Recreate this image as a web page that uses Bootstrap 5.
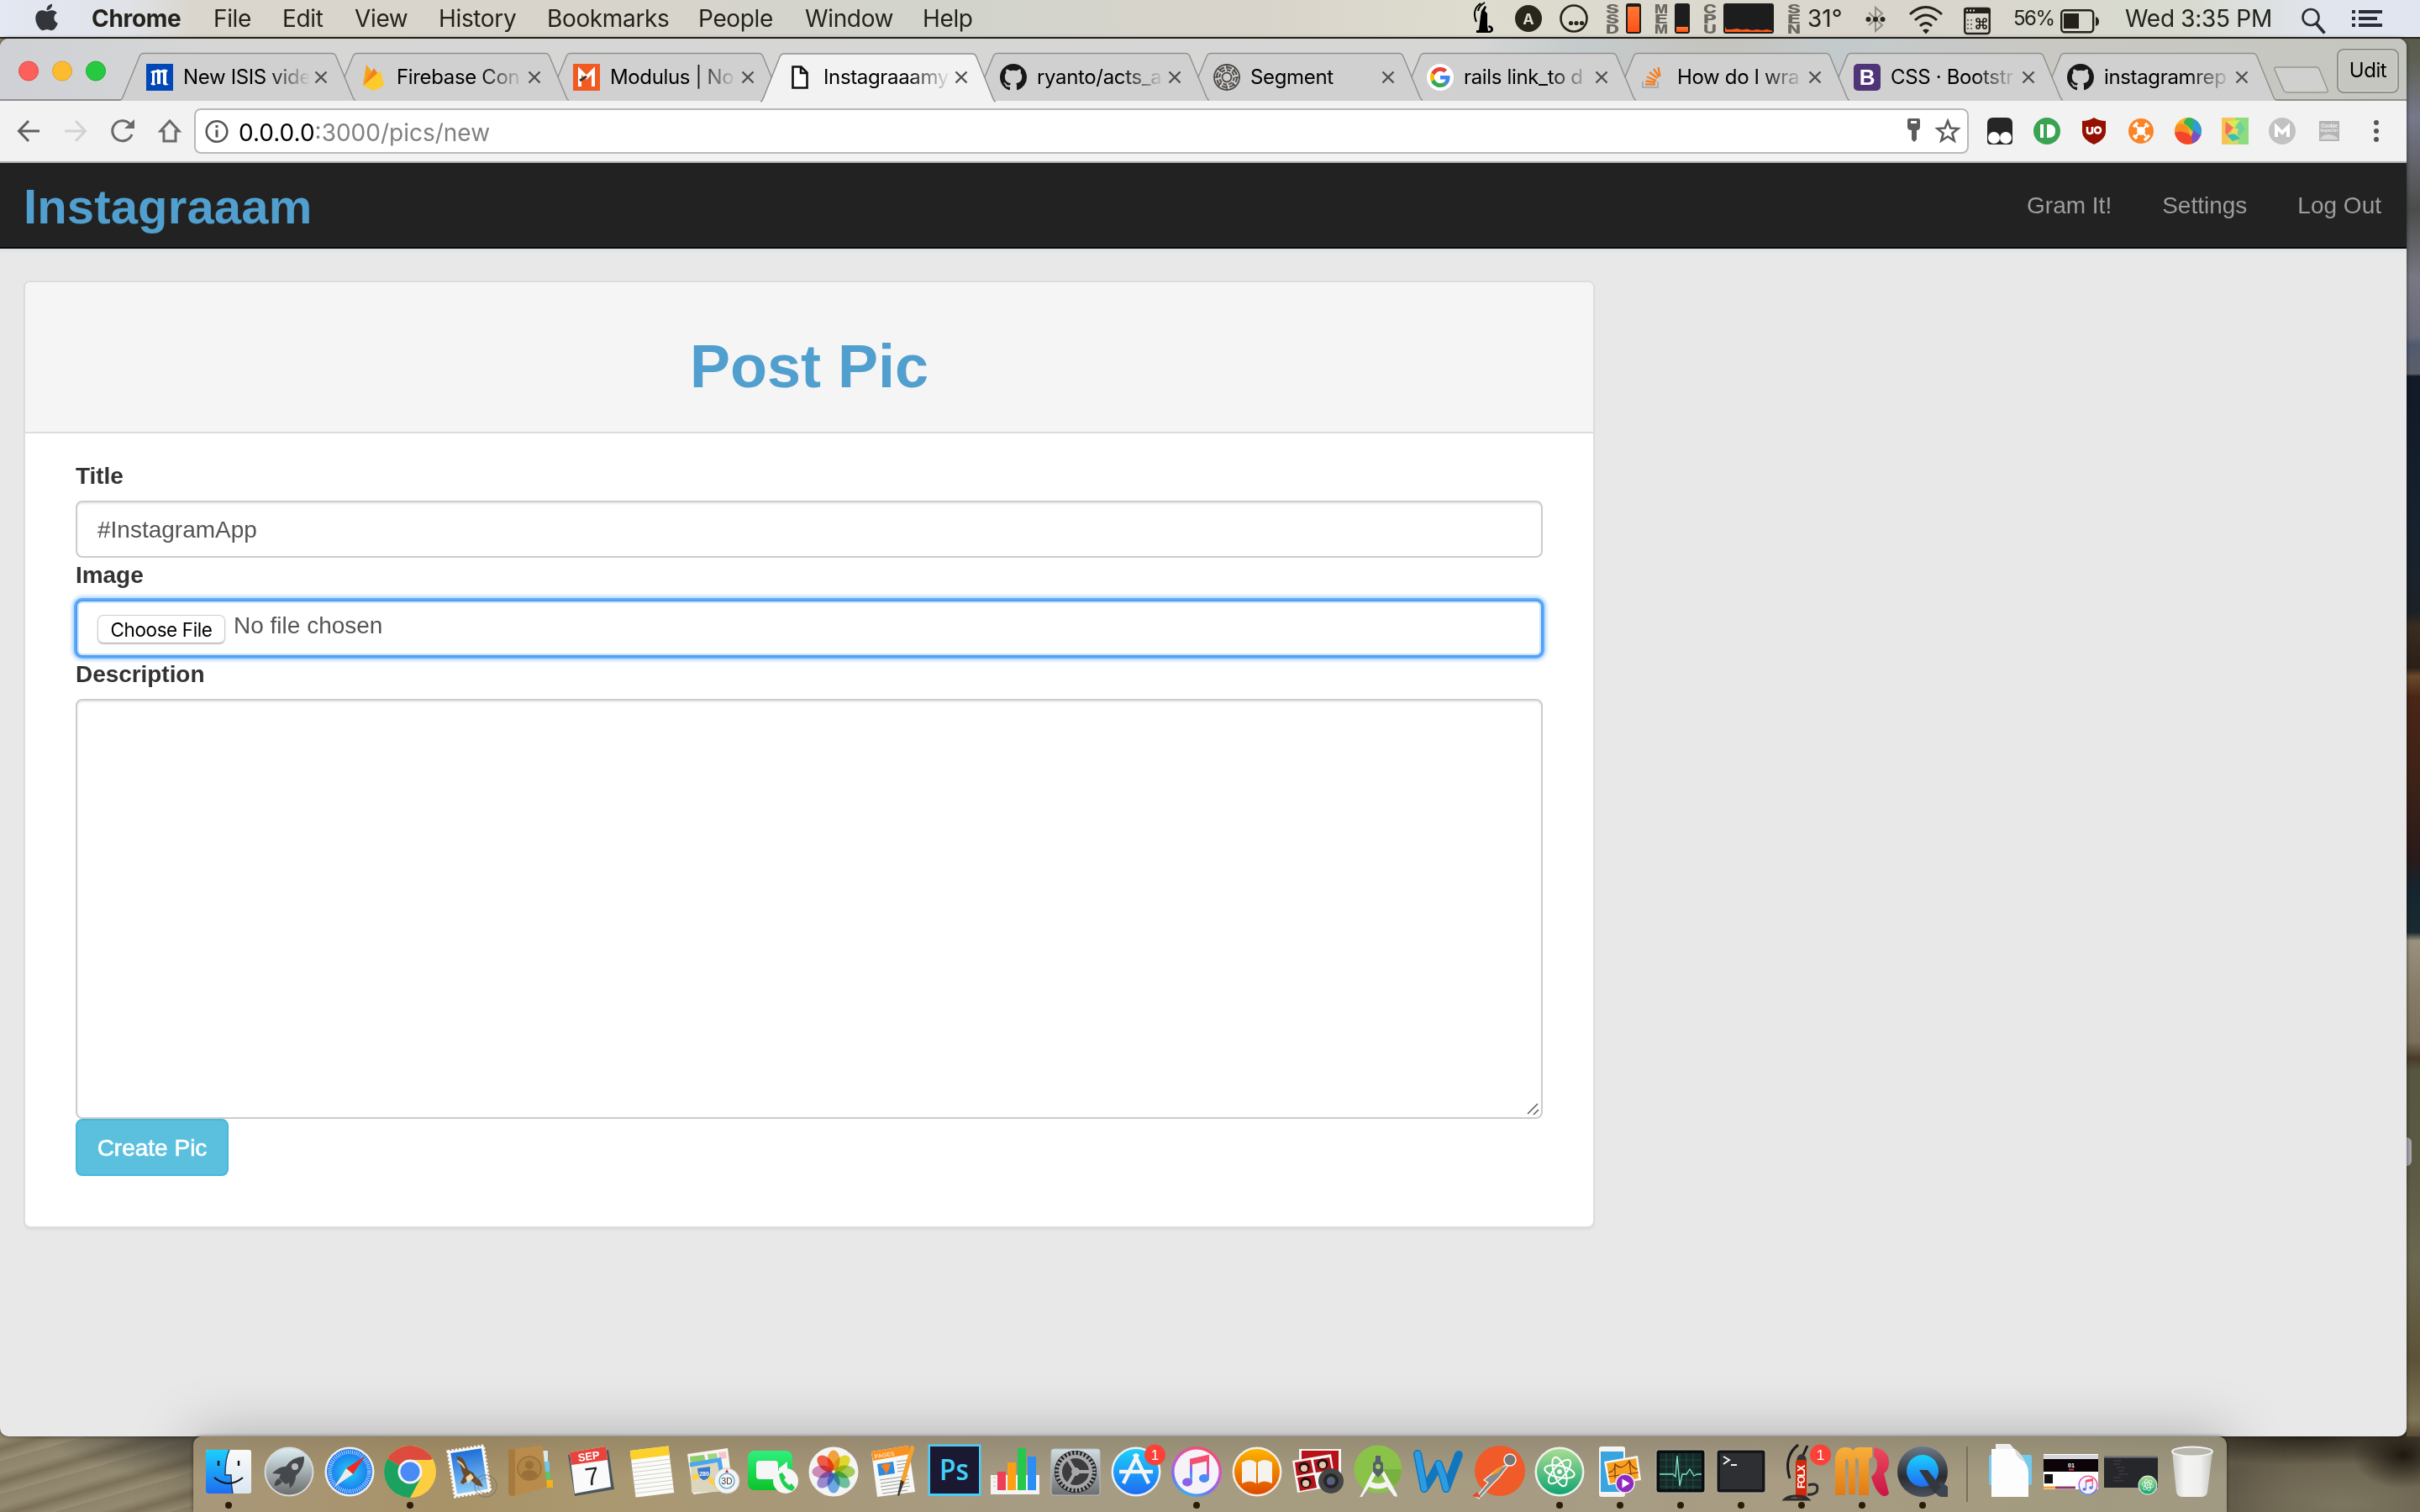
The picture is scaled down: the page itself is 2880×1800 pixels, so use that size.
<!DOCTYPE html>
<html lang="en">
<head>
<meta charset="utf-8">
<title>Instagraaam</title>
<link href="https://cdn.jsdelivr.net/npm/bootstrap@5.3.0/dist/css/bootstrap.min.css" rel="stylesheet">
<style>
body{width:2880px;height:1800px;overflow:hidden;font-family:"Liberation Sans",Arial,sans-serif;font-size:28px;line-height:40px;color:#333;
 background:
 linear-gradient(180deg,#4c5240 0,#5c6052 70px,#77788a 140px,#4b4d4a 250px,#787884 330px,#6a6b78 400px,#505a70 410px,#5c5f68 445px,#111a26 448px,#17222e 640px,#1d2126 730px,#3a2c20 745px,#2a2018 795px,#6b4a2c 805px,#4a2616 830px,#3b2218 940px,#2a1a1a 1020px,#14252e 1060px,#1b2a30 1110px,#99917e 1120px,#857c68 1180px,#7a705a 1240px,#4a3a28 1260px,#565641 1275px,#5c5a44 1400px,#6b6850 1500px,#5b5238 1620px,#80765a 1690px,#5a4c34 1710px) 2864px 0/16px 1710px no-repeat,
 radial-gradient(60px 40px at 2860px 1732px,#1e1810,transparent),
 radial-gradient(220px 34px at 2740px 1710px,#2a251b,transparent),
 radial-gradient(160px 60px at 2790px 1790px,#7d7660,transparent),
 linear-gradient(90deg,transparent 2600px,#675f4c 2660px),
 radial-gradient(180px 60px at 230px 1700px,#45423a,transparent),
 repeating-linear-gradient(164deg,#8d8369 0,#948a72 14px,#7c7158 24px,#9a9078 38px);}
.ui{font-family:Inter,Roboto,sans-serif}
svg{display:block;flex:none;overflow:visible}
.macbar{height:46px;padding-left:42px;border-bottom:2px solid #2a261e;color:#23221c;line-height:44px;
 background:linear-gradient(90deg,#e4e8f2 0,#e0e2e8 150px,#dad6cd 230px,#d9d4cb 620px,#d2d4cc 1150px,#d9d4cb 1500px,#dedccf 1750px,#d9d5cd 2250px,#d8dad0 2600px,#e1e5ed 2760px,#e0e5f0 2880px)}
.macbar span{display:block;white-space:nowrap;flex:none}
.m-apple{width:67px}.m-chrome{width:146px;font-weight:700;letter-spacing:-.3px}.m-file{width:82px}.m-edit{width:86px}.m-view{width:100px}.m-hist{width:129px}
.m-book{width:180px}.m-peop{width:127px}.m-wind{width:140px}.m-help{width:655px}
.m-temp{width:70px}.m-batt{width:56px;font-size:24px;letter-spacing:-1.5px}.m-clock{width:211px;letter-spacing:-.3px}
.macbar .m-menu{letter-spacing:-.35px;margin-left:-1px;padding-right:1px;box-sizing:content-box}
.win{width:2864px;height:1664px;border-radius:10px;background:#e8e8e8;overflow:hidden;box-shadow:0 0 5px rgba(0,0,0,.55)}
.tabstrip{height:74px;padding-left:20px;border-bottom:2px solid #8f8f8f;position:relative;
 background:linear-gradient(90deg,#cfd1d6 0,#d6d6d5 250px,#d6d6d5 1750px,#c4cbcc 1880px,#c6c4be 2050px,#c3cacc 2180px,#c9c8c3 2420px,#c6c6c0 2864px)}
.lights{width:123px;padding-top:26px}
.btab{width:280px;height:74px;margin-right:-26px;position:relative;flex:none;padding:17px 0 0 31px;font-size:24px;letter-spacing:-.35px;line-height:58px;color:#000}
.btab>.tabshape{position:absolute;left:0;top:0}
.btab>.fav{position:relative;margin-right:12px}
.btab>.ttl{position:relative;width:150px;white-space:nowrap;-webkit-mask-image:linear-gradient(90deg,#000 100px,transparent 152px);mask-image:linear-gradient(90deg,#000 100px,transparent 152px)}
.btab>.cls{position:relative;margin-left:6px}
.t1{z-index:9}.t2{z-index:8}.t3{z-index:7}.t4{z-index:20}.t5{z-index:6}.t6{z-index:5}.t7{z-index:4}.t8{z-index:3}.t9{z-index:2}.t10{z-index:1}
.newtab{margin:33px 0 0 23px}
.userbtn{width:74px;height:53px;margin:12px 0 0 9px;border:2px solid #92928e;border-radius:8px;font-size:24px;line-height:48px;color:#000;text-align:center;letter-spacing:-.4px;box-shadow:inset 0 0 0 1px #d8d8d4}
.toolbar{height:74px;background:#f2f2f2;border-bottom:2px solid #b0b0b0;padding-left:20px}
.omni{width:2112px;height:54px;margin-left:-2px;border:2px solid #b9b9b9;border-radius:8px;background:#fff;padding-left:11px;color:#808080;letter-spacing:0}
.omni b{font-weight:400;color:#000}
.appbar{height:102px;padding:0 30px 0 28px;background:#222;border-bottom:2px solid #080808;box-shadow:0 2px 4px #d4e0e6}
.appbar .navbar-brand{font-size:58px;font-weight:700;color:#519fce;line-height:60px;margin:0;padding:3px 0 0;letter-spacing:.15px}
.appbar .nav-link{color:#9d9d9d;padding:1px 0 0;letter-spacing:0}
.appbar .navgap{margin-left:60px}
.panel-card{width:1870px;margin:38px 0 0 28px;border:2px solid #ddd;border-radius:8px;box-shadow:0 2px 2px rgba(0,0,0,.05)}
.panel-card>.card-header{height:180px;background:#f5f5f5;border-bottom:2px solid #ddd;border-radius:6px 6px 0 0;padding:0}
.panel-card h1{font-size:72px;font-weight:700;color:#519fce;line-height:80px;margin:22px 0 0}
.panel-card>.card-body{padding:30px 60px 60px}
.panel-card label{display:block;font-weight:700;height:40px;line-height:42px;margin-bottom:10px;letter-spacing:-.05px}
.panel-card .form-control{height:68px;padding:12px 24px;border:2px solid #ccc;border-radius:8px;font-size:28px;line-height:42px;color:#555;box-shadow:inset 0 2px 2px rgba(0,0,0,.075)}
.panel-card .filebox{border-color:#4a9ff5;box-shadow:0 0 0 2px #63adf8,0 0 4px 4px #a9d2fb,inset 0 0 0 2px #cfe4fd;line-height:34px}
.filebtn{width:152px;height:34px;margin-top:4px;font-size:22.500px;line-height:34px;color:#000;background:#fff;border:1px solid #cfcfcf;border-bottom-color:#b0b0b0;border-radius:7px;text-align:center;box-shadow:0 1px 2px rgba(0,0,0,.2);letter-spacing:-.4px}
.filename{padding-left:10px}
.panel-card .descbox{height:500px;resize:none}
.grip{position:absolute;right:3px;bottom:3px}
.btn-create{height:68px;width:182px;padding:0;font-size:28px;line-height:66px;color:#fff;background:#5bc0de;border:2px solid #46b8da;border-radius:8px;-webkit-text-stroke:.6px #fff;letter-spacing:0}
.dock{width:2420px;height:90px;margin-left:230px;padding-left:6px;border-radius:10px 10px 0 0;position:relative;box-shadow:0 0 70px rgba(0,0,0,.28),0 0 4px rgba(0,0,0,.5);
 background:linear-gradient(180deg,rgba(70,65,55,.18),transparent 50px),linear-gradient(90deg,#a8987a 0,#a89268 300px,#aa9870 480px,#a89878 700px,#a69c84 1000px,#a69c80 1300px,#a79c84 1700px,#a89c82 1880px,#a39b80 2200px,#a19a82 2420px)}
.petals ellipse{mix-blend-mode:multiply}
.knob{position:absolute;left:2864px;top:1354px;width:6px;height:34px;border-radius:0 6px 6px 0;background:#a6a6ac}
</style>
<script src="https://cdn.jsdelivr.net/npm/bootstrap@5.3.0/dist/js/bootstrap.bundle.min.js"></script>
</head>
<body class="m-0">
<svg width="0" height="0" class="position-absolute">
 <defs>
  <symbol id="tb" viewBox="0 0 280 74"><path d="M0 73.500Q3 73 4 70L24 20Q25.500 18 28 18H252Q254.500 18 256 20L276 70Q277 73 280 73.500V74H0z" fill="#d0d0d0"/><path d="M0 73Q2 72.500 3 70L23.500 20Q25 17.500 28 17.500H252Q255 17.500 256.500 20L277 70Q278 72.500 280 73" fill="none" stroke="#8f8f8f" stroke-width="1.400"/></symbol>
  <symbol id="tba" viewBox="0 0 280 74"><path d="M0 74Q2 73 3 70L23.500 20Q25 17.500 28 17.500H252Q255 17.500 256.500 20L277 70Q278 73 280 74z" fill="#f2f2f2"/><path d="M0 73Q2 72.500 3 70L23.500 20Q25 17.500 28 17.500H252Q255 17.500 256.500 20L277 70Q278 72.500 280 73" fill="none" stroke="#8f8f8f" stroke-width="1.400"/></symbol>
  <symbol id="cl" viewBox="0 0 16 16"><path d="M1.500 1.500l13 13M14.500 1.500l-13 13" stroke="#505050" stroke-width="2.400"/></symbol>
  <symbol id="gh" viewBox="0 0 16 16"><path fill="#191717" d="M8 0C3.580 0 0 3.580 0 8c0 3.540 2.290 6.530 5.470 7.590.4.070.55-.17.55-.38 0-.19-.01-.82-.01-1.490-2.010.37-2.530-.49-2.690-.94-.09-.23-.48-.94-.82-1.130-.28-.15-.68-.52-.01-.53.63-.01 1.080.58 1.230.82.72 1.210 1.870.87 2.330.66.070-.52.28-.87.51-1.070-1.780-.2-3.640-.89-3.640-3.950 0-.87.31-1.590.82-2.150-.08-.2-.36-1.020.080-2.120 0 0 .67-.21 2.200.82.64-.18 1.320-.27 2-.27.68 0 1.360.09 2 .27 1.530-1.040 2.200-.82 2.200-.82.44 1.100.16 1.920.080 2.120.51.56.82 1.270.82 2.150 0 3.070-1.870 3.750-3.650 3.950.29.25.54.73.54 1.480 0 1.070-.01 1.930-.01 2.200 0 .21.15.46.55.38A8.013 8.013 0 0016 8c0-4.420-3.580-8-8-8z"/></symbol>
  <symbol id="dot" viewBox="0 0 10 10"><circle cx="5" cy="5" r="4" fill="#2a1c08"/></symbol>
  <linearGradient id="gBlue" x2="0" y2="1"><stop stop-color="#1bd0fb"/><stop offset="1" stop-color="#1f6cf2"/></linearGradient>
  <linearGradient id="gWhite" x2="0" y2="1"><stop stop-color="#fafafa"/><stop offset="1" stop-color="#dbe6f3"/></linearGradient>
  <linearGradient id="gRocket" x2="0" y2="1"><stop stop-color="#dceef3"/><stop offset="1" stop-color="#6d6d6d"/></linearGradient>
  <radialGradient id="gSaf"><stop stop-color="#22d0f2"/><stop offset="1" stop-color="#1a6df0"/></radialGradient>
  <linearGradient id="gSky" x2="0" y2="1"><stop stop-color="#1f6fd8"/><stop offset="1" stop-color="#8ccaf6"/></linearGradient>
  <linearGradient id="gGreen" x2="0" y2="1"><stop stop-color="#2ff07c"/><stop offset="1" stop-color="#0bc32a"/></linearGradient>
  <linearGradient id="gOr" x2="0" y2="1"><stop stop-color="#fdb500"/><stop offset="1" stop-color="#dd4a00"/></linearGradient>
  <linearGradient id="gAtom" x2="0" y2="1"><stop stop-color="#a8dc92"/><stop offset="1" stop-color="#12a470"/></linearGradient>
  <linearGradient id="gTun" x1="0.700" x2="0.300" y2="1"><stop stop-color="#fb4a62"/><stop offset=".45" stop-color="#c858d8"/><stop offset=".75" stop-color="#7a6cf0"/><stop offset="1" stop-color="#2fb6f6"/></linearGradient>
  <linearGradient id="gGray" x2="0" y2="1"><stop stop-color="#d2dee3"/><stop offset="1" stop-color="#6c6e71"/></linearGradient>
  <linearGradient id="gMa" x2="0" y2="1"><stop stop-color="#f7b03c"/><stop offset="1" stop-color="#e27a12"/></linearGradient>
  <linearGradient id="gMb" x2="0" y2="1"><stop stop-color="#ee4a5e"/><stop offset="1" stop-color="#c81446"/></linearGradient>
  <linearGradient id="gQ" x2="0" y2="1"><stop stop-color="#6c7a8a"/><stop offset=".6" stop-color="#2a2c32"/><stop offset="1" stop-color="#4a5260"/></linearGradient>
  <linearGradient id="gSsd" x2="0" y2="1"><stop stop-color="#ff7a35"/><stop offset="1" stop-color="#ff4f14"/></linearGradient>
  <linearGradient id="gTrash"><stop stop-color="#c8c8c4"/><stop offset=".3" stop-color="#f4f4f2"/><stop offset=".7" stop-color="#efefed"/><stop offset="1" stop-color="#c6c6c0"/></linearGradient>
  <symbol id="tunes" viewBox="0 0 62 62"><circle cx="31" cy="31" r="30" fill="url(#gTun)"/><circle cx="31" cy="31" r="26.500" fill="#f6f3f8"/><path d="M24.500 43V17l20-4.500V38" fill="none" stroke="url(#gTun)" stroke-width="3"/><path d="M23 16l23-5v7l-23 5z" fill="#f2506e"/><ellipse cx="20" cy="43.500" rx="6" ry="5" fill="#8a62ea"/><ellipse cx="40" cy="39" rx="6" ry="5" fill="#4a8cf2"/></symbol>
  <symbol id="atom" viewBox="0 0 62 62"><circle cx="31" cy="31" r="29.500" fill="#eef2ee"/><circle cx="31" cy="31" r="27" fill="url(#gAtom)"/><g fill="none" stroke="#fff" stroke-width="2"><ellipse cx="31" cy="31" rx="18" ry="7" transform="rotate(12 31 31)"/><ellipse cx="31" cy="31" rx="18" ry="7" transform="rotate(72 31 31)"/><ellipse cx="31" cy="31" rx="18" ry="7" transform="rotate(132 31 31)"/></g><circle cx="31" cy="31" r="2.800" fill="#fff"/></symbol>
 </defs>
</svg>
<div class="knob"></div>

<header class="macbar ui d-flex">
 <span class="m-apple"><svg width="27" height="38" viewBox="0 0 384 512"><path transform="translate(0 20)" fill="#33353a" d="M318.700 268.700c-.2-36.700 16.400-64.400 50-84.800-18.800-26.900-47.200-41.700-84.700-44.600-35.500-2.800-74.300 20.700-88.500 20.700-15 0-49.400-19.700-76.400-19.700C63.300 141.200 4 184.800 4 273.500q0 39.300 14.400 81.200c12.800 36.700 59 126.700 107.200 125.200 25.200-.6 43-17.900 75.800-17.900 31.800 0 48.300 17.900 76.400 17.900 48.600-.7 90.400-82.500 102.600-119.300-65.200-30.700-61.700-90-61.700-91.900zm-56.600-164.200c27.300-32.400 24.800-61.900 24-72.500-24.100 1.400-52 16.400-67.900 34.900-17.500 19.800-27.800 44.300-25.600 71.900 26.100 2 49.900-11.400 69.500-34.300z"/></svg></span>
 <span class="m-chrome">Chrome</span><span class="m-menu m-file">File</span><span class="m-menu m-edit">Edit</span><span class="m-menu m-view">View</span><span class="m-menu m-hist">History</span><span class="m-menu m-book">Bookmarks</span><span class="m-menu m-peop">People</span><span class="m-menu m-wind">Window</span><span class="m-menu m-help">Help</span>
 <svg width="49" height="44" viewBox="0 0 49 44"><path d="M3 39v-3h3l2-17 1-6 4-6 2 1-2 5 3 3v14l1 7 3-1v-2l-3-2 1-2q5 1 5 5 0 3-4 4z" fill="#000"/><path d="M8 4Q-3 12 3 26M13 3Q6 7 5 13" fill="none" stroke="#000" stroke-width="2"/></svg>
 <svg width="53" height="44" viewBox="0 0 53 44"><circle cx="16" cy="22" r="16" fill="#29261b"/><text x="16" y="28.500" font-size="18" font-weight="700" fill="#dedbd0" text-anchor="middle">A</text></svg>
 <svg width="54" height="44" viewBox="0 0 54 44"><circle cx="17" cy="22" r="15.500" fill="none" stroke="#26231b" stroke-width="2.600"/><g fill="#26231b"><circle cx="13.500" cy="27.500" r="2.600"/><circle cx="20" cy="27.500" r="2.600"/><circle cx="26.500" cy="27.500" r="2.600"/></g></svg>
 <svg width="58" height="44" viewBox="0 0 58 44"><g fill="#6b6962" font-size="14.500" font-weight="800"><text x="1" y="15.500" textLength="16" lengthAdjust="spacingAndGlyphs">S</text><text x="1" y="27.500" textLength="16" lengthAdjust="spacingAndGlyphs">S</text><text x="1" y="39.500" textLength="16" lengthAdjust="spacingAndGlyphs">D</text></g><rect x="25" y="4" width="18" height="36" rx="3" fill="#1d1d1d"/><rect x="27" y="8" width="14" height="30" fill="url(#gSsd)"/></svg>
 <svg width="58" height="44" viewBox="0 0 58 44"><g fill="#6b6962" font-size="14.500" font-weight="800"><text x="1" y="15.500" textLength="16" lengthAdjust="spacingAndGlyphs">M</text><text x="1" y="27.500" textLength="16" lengthAdjust="spacingAndGlyphs">E</text><text x="1" y="39.500" textLength="16" lengthAdjust="spacingAndGlyphs">M</text></g><rect x="25" y="4" width="18" height="36" rx="3" fill="#1d1d1d"/><rect x="27" y="32" width="14" height="6" fill="url(#gSsd)"/></svg>
 <svg width="100" height="44" viewBox="0 0 100 44"><g fill="#6b6962" font-size="14.500" font-weight="800"><text x="1" y="15.500" textLength="16" lengthAdjust="spacingAndGlyphs">C</text><text x="1" y="27.500" textLength="16" lengthAdjust="spacingAndGlyphs">P</text><text x="1" y="39.500" textLength="16" lengthAdjust="spacingAndGlyphs">U</text></g><rect x="25" y="4" width="60" height="36" rx="3" fill="#1d1d1d"/><path d="M27 38v-6l2 3 6 0 6-1 6 1.500 6-1 6 1.500 6-1 6 1 6-1 6 1.500V38z" fill="#ff5a1c"/></svg>
 <svg width="25" height="44" viewBox="0 0 25 44"><g fill="#6b6962" font-size="14.500" font-weight="800"><text x="1" y="15.500" textLength="16" lengthAdjust="spacingAndGlyphs">S</text><text x="1" y="27.500" textLength="16" lengthAdjust="spacingAndGlyphs">E</text><text x="1" y="39.500" textLength="16" lengthAdjust="spacingAndGlyphs">N</text></g></svg>
 <span class="m-temp">31°</span>
 <svg width="51" height="44" viewBox="0 0 51 44"><path d="M3 15l16 15-8 7V9l8 7L3 30" fill="none" stroke="#8f8d86" stroke-width="2"/><g fill="#29261b"><circle cx="2.500" cy="23" r="3"/><circle cx="11" cy="23" r="3"/><circle cx="19.500" cy="23" r="3"/></g></svg>
 <svg width="65" height="44" viewBox="0 0 65 44"><g fill="none" stroke="#23211a" stroke-width="3"><path d="M1 17Q20 0 39 17M7 24Q20 12 33 24M13 31Q20 24 27 31"/></g><path d="M16 36q4-3 8 0l-4 4.500z" fill="#23211a"/></svg>
 <svg width="59" height="44" viewBox="0 0 59 44"><rect x="1.200" y="10" width="29.500" height="30" rx="3" fill="none" stroke="#23211a" stroke-width="2.400"/><path d="M0 16v-4q0-3 3-3h26q3 0 3 3v4z" fill="#23211a"/><path d="M3 12.500h2m2 0h2m2 0h2" stroke="#ddd" stroke-width="2"/><path d="M4 24h2m2 0h2M4 29h2m2 0h2M4 34h2m2 0h2" stroke="#55524a" stroke-width="1.500"/><path d="M19 26h4v4h-4zM19 26h-2a2 2 0 112-2zM23 26v-2a2 2 0 112 2zM23 30h2a2 2 0 11-2 2zM19 30v2a2 2 0 11-2-2z" fill="none" stroke="#23211a" stroke-width="1.700"/></svg>
 <span class="m-batt">56%</span>
 <svg width="77" height="44" viewBox="0 0 77 44"><rect x="1.200" y="12.200" width="38" height="26" rx="4" fill="none" stroke="#23211a" stroke-width="2.400"/><rect x="4" y="16" width="18" height="18" fill="#23211a"/><path d="M42 20q4 1 4 5.500t-4 5.500z" fill="#23211a"/></svg>
 <span class="m-clock">Wed 3:35 PM</span>
 <svg width="59" height="44" viewBox="0 0 59 44"><circle cx="10" cy="20.500" r="9.500" fill="none" stroke="#2b2d33" stroke-width="2.600"/><path d="M16.500 28l10 11.500" stroke="#2b2d33" stroke-width="3.600"/></svg>
 <svg width="36" height="44" viewBox="0 0 36 44"><path d="M0 14h4M8 14h28M0 22h4M8 22h22M0 30h4M8 30h28" stroke="#2b2d38" stroke-width="4"/></svg>
</header>

<main class="win position-relative">
 <div class="tabstrip ui d-flex align-items-start">
  <div class="lights"><svg width="110" height="26" viewBox="0 0 110 26"><g transform="translate(2 0)"><circle cx="12" cy="12.500" r="11.500" fill="#fc605b" stroke="#e04a44"/><circle cx="52" cy="12.500" r="11.500" fill="#fdbc2f" stroke="#e0a12a"/><circle cx="92" cy="12.500" r="11.500" fill="#27c941" stroke="#1aad2c"/></g></svg></div>
  <div class="btab t1 d-flex align-items-center"><svg class="tabshape" width="280" height="74"><use href="#tb"/></svg><svg class="fav" width="32" height="32" viewBox="0 0 32 32"><rect width="32" height="32" fill="#0048b8"/><path d="M5 10q3-3 6-2 3-3 6 0 5-3 9 0-2 1-2 3v11q0 2 3 2-4 3-7 0V11q-2-2-3 0v13h-4V11q-1-2-3 0v11q0 3 2 2-3 3-7 0 2-1 2-3V11z" fill="#fff"/></svg><div class="ttl">New ISIS vide</div><svg class="cls" width="16" height="16"><use href="#cl"/></svg></div>
  <div class="btab t2 d-flex align-items-center"><svg class="tabshape" width="280" height="74"><use href="#tb"/></svg><svg class="fav" width="32" height="32" viewBox="0 0 32 32"><path d="M4 26L8 1l7 9z" fill="#f9a11b"/><path d="M4 26L17 5l5 7z" fill="#f58220"/><path d="M4 26L25 8l4 18-12 6z" fill="#fcca2b"/></svg><div class="ttl">Firebase Con</div><svg class="cls" width="16" height="16"><use href="#cl"/></svg></div>
  <div class="btab t3 d-flex align-items-center"><svg class="tabshape" width="280" height="74"><use href="#tb"/></svg><svg class="fav" width="32" height="32" viewBox="0 0 32 32"><rect width="32" height="32" fill="#f15a22"/><path d="M8 27V8l8 8 8-8v19" fill="none" stroke="#fff" stroke-width="4"/><path d="M8 20l8-5" stroke="#333" stroke-width="3"/></svg><div class="ttl">Modulus | No</div><svg class="cls" width="16" height="16"><use href="#cl"/></svg></div>
  <div class="btab t4 d-flex align-items-center"><svg class="tabshape" width="280" height="76" viewBox="0 0 280 74" preserveAspectRatio="none"><use href="#tba"/></svg><svg class="fav" width="32" height="32" viewBox="0 0 32 32"><path d="M7.500 3.500h10l7 7v18h-17zM17 3v8h8" fill="#fff" stroke="#111" stroke-width="2.600"/></svg><div class="ttl">Instagraaamy</div><svg class="cls" width="16" height="16"><use href="#cl"/></svg></div>
  <div class="btab t5 d-flex align-items-center"><svg class="tabshape" width="280" height="74"><use href="#tb"/></svg><svg class="fav" width="32" height="32" viewBox="0 0 32 32"><use href="#gh" width="32" height="32"/></svg><div class="ttl">ryanto/acts_a</div><svg class="cls" width="16" height="16"><use href="#cl"/></svg></div>
  <div class="btab t6 d-flex align-items-center"><svg class="tabshape" width="280" height="74"><use href="#tb"/></svg><svg class="fav" width="32" height="32" viewBox="0 0 32 32"><g fill="none" stroke="#4c4844"><circle cx="16" cy="16" r="15" stroke-width="1.800"/><circle cx="16" cy="16" r="5.500" stroke-width="1.800"/><circle cx="16" cy="16" r="12" stroke-width="2" stroke-dasharray="6 3.400"/><circle cx="16" cy="16" r="8.700" stroke-width="2" stroke-dasharray="4.500 2.300"/><path d="M16 1v5M16 26v5M1 16h5M26 16h5M5.400 5.400l4 4M22.600 22.600l4 4M5.400 26.600l4-4M22.600 9.400l4-4" stroke-width="1.500"/></g></svg><div class="ttl">Segment</div><svg class="cls" width="16" height="16"><use href="#cl"/></svg></div>
  <div class="btab t7 d-flex align-items-center"><svg class="tabshape" width="280" height="74"><use href="#tb"/></svg><svg class="fav" width="32" height="32" viewBox="0 0 32 32"><circle cx="16" cy="16" r="16" fill="#fff"/><g transform="translate(4 4) scale(.5)"><path fill="#EA4335" d="M24 9.500c3.540 0 6.710 1.220 9.210 3.600l6.850-6.850C35.900 2.380 30.470 0 24 0 14.620 0 6.510 5.380 2.560 13.220l7.980 6.190C12.430 13.720 17.740 9.500 24 9.500z"/><path fill="#4285F4" d="M46.980 24.550c0-1.570-.15-3.090-.38-4.550H24v9.020h12.940c-.58 2.960-2.260 5.480-4.780 7.180l7.730 6c4.510-4.180 7.090-10.360 7.090-17.650z"/><path fill="#FBBC05" d="M10.530 28.590c-.48-1.450-.76-2.990-.76-4.590s.27-3.140.76-4.590l-7.980-6.190C.92 16.460 0 20.120 0 24c0 3.880.92 7.540 2.560 10.780l7.970-6.190z"/><path fill="#34A853" d="M24 48c6.480 0 11.930-2.130 15.890-5.810l-7.730-6c-2.150 1.450-4.920 2.300-8.160 2.300-6.260 0-11.570-4.220-13.470-9.910l-7.980 6.190C6.510 42.620 14.620 48 24 48z"/></g></svg><div class="ttl">rails link_to d</div><svg class="cls" width="16" height="16"><use href="#cl"/></svg></div>
  <div class="btab t8 d-flex align-items-center"><svg class="tabshape" width="280" height="74"><use href="#tb"/></svg><svg class="fav" width="32" height="32" viewBox="0 0 32 32"><path d="M3 21v7h18v-7" fill="none" stroke="#a6adb4" stroke-width="2"/><path d="M6 24.500h12M6.500 20.500l11.500 1.500M8 15.500l11 4.500M11 10l9.500 7M16 6l6.500 9.500M21.500 4l2 11" stroke="#f48024" stroke-width="2.400"/></svg><div class="ttl">How do I wra</div><svg class="cls" width="16" height="16"><use href="#cl"/></svg></div>
  <div class="btab t9 d-flex align-items-center"><svg class="tabshape" width="280" height="74"><use href="#tb"/></svg><svg class="fav" width="32" height="32" viewBox="0 0 32 32"><rect width="32" height="32" rx="5" fill="#4f3578"/><text x="16" y="25" font-family="Liberation Sans" font-size="26" font-weight="700" fill="#fff" text-anchor="middle">B</text></svg><div class="ttl">CSS · Bootstr</div><svg class="cls" width="16" height="16"><use href="#cl"/></svg></div>
  <div class="btab t10 d-flex align-items-center"><svg class="tabshape" width="280" height="74"><use href="#tb"/></svg><svg class="fav" width="32" height="32" viewBox="0 0 32 32"><use href="#gh" width="32" height="32"/></svg><div class="ttl">instagramrep</div><svg class="cls" width="16" height="16"><use href="#cl"/></svg></div>
  <svg class="newtab" width="66" height="32" viewBox="0 0 66 32"><path d="M3 1H50Q53 1 54 3L64 28Q65 31 62 31H16Q13 31 12 29L1 4Q0 1 3 1z" fill="#d0d0ce" stroke="#979793" stroke-width="1.500"/></svg>
  <div class="userbtn">Udit</div>
 </div>
 <div class="toolbar ui d-flex align-items-center">
  <svg width="56" height="32" viewBox="0 0 56 32"><path d="M27 16H3M14 4L2.500 16 14 28" fill="none" stroke="#5f5f5f" stroke-width="3"/></svg>
  <svg width="56" height="32" viewBox="0 0 56 32"><path d="M1 16h24M14 4l11.500 12L14 28" fill="none" stroke="#d2d2d2" stroke-width="3"/></svg>
  <svg width="56" height="32" viewBox="0 0 56 32"><path d="M25 20A12 12 0 1 1 22.500 7.500" fill="none" stroke="#6a6a6a" stroke-width="3"/><path d="M28 2v11H16z" fill="#6a6a6a"/></svg>
  <svg width="45" height="32" viewBox="0 0 45 32"><path d="M14 4L3 16h4v12h14V16h4z" fill="none" stroke="#6a6a6a" stroke-width="3"/></svg>
  <div class="omni d-flex align-items-center"><svg width="40" height="32" viewBox="0 0 40 32"><circle cx="14" cy="16.500" r="12.300" fill="none" stroke="#555" stroke-width="2.600"/><path d="M14 9v3M14 14.500v9" stroke="#555" stroke-width="3"/></svg><div class="flex-grow-1 pt-1"><b>0.0.0.0</b>:3000/pics/new</div>
   <svg width="34" height="32" viewBox="0 0 34 32"><path d="M1 3q0-2 2-2h11q2 0 2 2v8q0 4-4 4v11l-3 3-3-3V15q-5 0-5-4zM5 4v3h7V4z" fill="#5c5c5c" fill-rule="evenodd"/></svg>
   <svg width="38" height="32" viewBox="0 0 38 32"><path d="M15 4l3.300 8.500 9 .5-7 5.700 2.400 8.800L15 22.500l-7.700 5L9.700 18.700l-7-5.700 9-.5z" fill="none" stroke="#5c5c5c" stroke-width="2.600"/></svg></div>
  <svg width="516" height="34" viewBox="1 0 516 34">
   <g transform="translate(23 1)"><path d="M0 7q0-7 7-7h16q7 0 7 7v21q0 4-4 4H4q-4 0-4-4z" fill="#262626"/><circle cx="8" cy="24" r="7" fill="#fff"/><circle cx="22" cy="24" r="7" fill="#fff"/></g>
   <g transform="translate(78 1)"><circle cx="16" cy="16" r="16" fill="#3aa352"/><path d="M16 8h2q8 0 8 8t-8 8h-2zM8 8h4v16H8z" fill="#fff"/></g>
   <g transform="translate(136 1)"><path d="M14 0q6 4 14 4v13q0 9-14 15Q0 26 0 17V4q8 0 14-4z" fill="#951001"/><path d="M6 11v5q0 3 3 3t3-3v-5M12 11v8" stroke="#fff" stroke-width="2.600" fill="none"/><circle cx="18.500" cy="15" r="3.500" stroke="#fff" stroke-width="2.600" fill="none"/></g>
   <g transform="translate(191 1)"><circle cx="15" cy="16" r="15" fill="#fb8526"/><circle cx="15" cy="16" r="5" fill="#fff"/><path d="M9 10l12 12M21 10L9 22" stroke="#fff" stroke-width="2.400"/><path d="M6 11l5-5M19 27l6-6M20 7l4 4M6 21l4 4" stroke="#fff" stroke-width="3.400" fill="none"/></g>
   <g transform="translate(246 1)"><circle cx="16" cy="16" r="16" fill="#f6b32b"/><path d="M16 0a16 16 0 0116 16q-6 6-12-1t-9-8q0-5 5-7z" fill="#2fb457"/><path d="M22 2a16 16 0 019 20q-7 1-9-8 0-7 0-12z" fill="#2f9ae0"/><path d="M31 21a16 16 0 01-10 10q-4-6 2-16 4 4 8 6z" fill="#7d4fc4"/><path d="M0 17q8-3 14 0 8 5 7 14A16 16 0 010 17z" fill="#f2452c"/><path d="M2 9q8-4 14 3l2 8Q6 14 0 18q0-5 2-9z" fill="#fb8c1f"/></g>
   <g transform="translate(302 1)"><rect width="32" height="32" fill="#d8d860"/><path d="M16 0h16v32H20z" fill="#8edc80"/><path d="M0 0h14L8 32H0z" fill="#f6c454"/><path d="M6 4l16-1-8 9z" fill="#d8ec50"/><path d="M5 5l9 7-8 9-2-4z" fill="#f8705c"/><path d="M22 4l6 10-7 8-5-10z" fill="#6cd29c"/><path d="M6 21l9-2 7 6-9 3z" fill="#38c0b4"/><path d="M14 12l6 2-2 6-6-1z" fill="#f0d860"/></g>
   <g transform="translate(358 1)"><circle cx="16" cy="16" r="16" fill="#c2c2c2"/><path d="M9 23V11l7 7 7-7v12" fill="none" stroke="#fff" stroke-width="4"/></g>
   <g transform="translate(418 5)"><rect width="24" height="24" fill="#b4b4b4"/><text x="12" y="8" font-size="6.500" font-weight="700" fill="#eee" text-anchor="middle" textLength="20">Cookie</text><text x="12" y="13" font-size="4.500" font-weight="700" fill="#eee" text-anchor="middle">Inspector</text><path d="M1 22q3-7 11-6t11 6z" fill="#d8d8d8"/></g>
   <g fill="#555"><circle cx="486" cy="7" r="3"/><circle cx="486" cy="17" r="3"/><circle cx="486" cy="27" r="3"/></g>
  </svg>
 </div>

 <nav class="appbar navbar d-flex justify-content-between align-items-center">
  <a class="navbar-brand" href="#">Instagraaam</a>
  <div class="d-flex"><a class="nav-link" href="#">Gram It!</a><a class="nav-link navgap" href="#">Settings</a><a class="nav-link navgap" href="#">Log Out</a></div>
 </nav>

 <section class="card panel-card">
  <div class="card-header d-flex align-items-center justify-content-center"><h1>Post Pic</h1></div>
  <div class="card-body">
   <label>Title</label>
   <div class="form-control">#InstagramApp</div>
   <label>Image</label>
   <div class="form-control filebox d-flex"><div class="filebtn ui">Choose File</div><div class="filename">No file chosen</div></div>
   <label>Description</label>
   <div class="form-control descbox position-relative"><svg class="grip" width="14" height="14" viewBox="0 0 14 14"><path d="M1 13L13 1M8 14l6-6" stroke="#666" stroke-width="1.700"/></svg></div>
   <button class="btn btn-create d-block">Create Pic</button>
  </div>
 </section>
</main>

<footer class="dock d-flex">
 <!-- Finder -->
 <svg width="72" height="90" viewBox="0 0 72 90"><rect x="9" y="16" width="54" height="52" rx="3" fill="url(#gWhite)"/><path d="M37 16H12q-3 0-3 3v46q0 3 3 3h29q-2-10-2-22h-7q0-20 5-30z" fill="url(#gBlue)"/><path d="M37 16q-5 10-5 30h7q0 12 2 22" fill="none" stroke="#1e3a60" stroke-width="1.400"/><path d="M24 29v6M48 29v6" stroke="#111" stroke-width="2.400"/><path d="M19 49q17 14 34 0" fill="none" stroke="#111" stroke-width="2"/><use href="#dot" x="31" y="77" width="10" height="10"/></svg>
 <!-- Launchpad -->
 <svg width="72" height="90" viewBox="0 0 72 90"><circle cx="36" cy="42" r="29.500" fill="#d6dadc"/><circle cx="36" cy="42" r="27.500" fill="url(#gRocket)"/><path d="M54 24q-14 0-22 12-7-1-16 8l10 1-2 5 8 7 4-2 1 7q7-7 7-15 11-10 10-23z" fill="#45484c"/><circle cx="43" cy="36" r="4" fill="#b4bcc0"/><path d="M23 50q-5 4-4 9 5 0 9-5z" fill="#45484c"/></svg>
 <!-- Safari -->
 <svg width="72" height="90" viewBox="0 0 72 90"><circle cx="36" cy="42" r="29.500" fill="#eef0f0"/><circle cx="36" cy="42" r="27" fill="url(#gSaf)"/><circle cx="36" cy="42" r="23.500" fill="none" stroke="#bfe4ff" stroke-width="5" stroke-dasharray=".9 1.560"/><path d="M54 24L32 38l8 7z" fill="#f02a22"/><path d="M18 60l14-22 8 7z" fill="#ececec"/></svg>
 <!-- Chrome -->
 <svg width="72" height="90" viewBox="0 0 72 90"><circle cx="36" cy="42" r="31" fill="#fdce42"/><path d="M36 42L9.200 26.500a31 31 0 0153.600 0z" fill="#dd4b3e"/><path d="M36 42L9.200 26.500A31 31 0 0036 73l13-24z" fill="#1ba261"/><path d="M36 28h27q5 12-1 29L50 42z" fill="#fdce42"/><circle cx="36" cy="42" r="14.500" fill="#f4f4f4"/><circle cx="36" cy="42" r="11.500" fill="#4a8af6"/><use href="#dot" x="31" y="77" width="10" height="10"/></svg>
 <!-- Mail -->
 <svg width="72" height="90" viewBox="0 0 72 90"><g transform="rotate(-9 34 42)"><rect x="13" y="14" width="43" height="55" fill="#f8f8f8" stroke="#f8f8f8" stroke-width="3" stroke-dasharray="2.500 2"/><rect x="16" y="17" width="37" height="49" fill="url(#gSky)"/></g><path d="M19 24q7-1 10 6l4 10 6 3q3 6 8 9l4 8-8-2-8-7-8 6-3-2 4-8q-3-6-4-12z" fill="#6a4a28"/><path d="M20 29q6 2 9 9M31 49l5-4 3 4-6 6z" stroke="#e2cfa8" stroke-width="1.500" fill="#e8dcc0"/><circle cx="54" cy="59" r="13" fill="none" stroke="#6c6c6c" stroke-opacity=".5" stroke-width="1.500"/><circle cx="54" cy="59" r="9" fill="none" stroke="#6c6c6c" stroke-opacity=".5"/></svg>
 <!-- Contacts -->
 <svg width="72" height="90" viewBox="0 0 72 90"><path d="M50 17l6 0v20h-6z" fill="#d9e8ea"/><path d="M52 30l6 0v12h-6z" fill="#6cc8e8"/><path d="M53 42h6v10h-6z" fill="#5fc46a"/><path d="M54 52h8v9h-8z" fill="#f2b21c"/><path d="M9 16l38-5q3 0 3 3l5 46-40 12q-5 0-6-5z" fill="#b98c4c"/><path d="M9 16q5-2 8 0v54q-7 3-8-4z" fill="#a77a40"/><circle cx="34" cy="38" r="14" fill="#b08548" stroke="#9a7038" stroke-width="1.500"/><circle cx="34" cy="34" r="5" fill="#9a7038"/><path d="M24 46q3-6 10-6t10 6q-10 10-20 0z" fill="#9a7038"/></svg>
 <!-- Calendar -->
 <svg width="72" height="90" viewBox="0 0 72 90"><path d="M8 22l48-6 7 47-47 8z" fill="#4a5560"/><path d="M10 19l43-7 6 48-43 8z" fill="#fafafa"/><path d="M10 19l43-7 2 16-43 6z" fill="#e8433c"/><text transform="rotate(-8 34 26)" x="33" y="28" font-size="13" font-weight="600" fill="#fff" text-anchor="middle">SEP</text><text transform="rotate(-8 36 50)" x="37" y="58" font-size="30" fill="#222" text-anchor="middle">7</text></svg>
 <!-- Notes -->
 <svg width="72" height="90" viewBox="0 0 72 90"><g transform="rotate(-7 36 42)"><rect x="13" y="14" width="46" height="56" fill="#fbfbf8"/><rect x="13" y="14" width="46" height="11" fill="#fcd12c"/><path d="M13 30h46M13 35h46M13 40h46M13 45h46M13 50h46M13 55h46M13 60h46M13 65h46" stroke="#cfcfca"/></g></svg>
 <!-- Maps -->
 <svg width="72" height="90" viewBox="0 0 72 90"><path d="M6 21l48-7 6 49-47 6z" fill="#f6f5ee"/><path d="M9 24l17-2 2 9-18 2z" fill="#8ecb6c"/><path d="M30 21l11-1 1 8-11 1z" fill="#9fd480"/><path d="M43 19l9-1 1 8-9 1z" fill="#f6c4d0"/><path d="M10 36l33-5 10 34-42 2z" fill="#dcd6bc"/><path d="M9 34l35-6 5 30" fill="none" stroke="#4aa6ee" stroke-width="5"/><path d="M12 50l14-6 20 20" fill="none" stroke="#fad04c" stroke-width="6"/><path d="M18 38l15-2v8q-2 8-8 8-6-2-7-14z" fill="#3b78d0"/><text x="26" y="47" font-size="7" font-weight="700" fill="#fff" text-anchor="middle">280</text><circle cx="53" cy="53" r="15" fill="#f4f4f4" stroke="#c8c8c8"/><circle cx="53" cy="53" r="9" fill="none" stroke="#6ab0d0" stroke-width="1.500"/><text x="53" y="57" font-size="10" fill="#333" text-anchor="middle">3D</text><path d="M51 43l2-4 2 4z" fill="#d22"/></svg>
 <!-- FaceTime -->
 <svg width="72" height="90" viewBox="0 0 72 90"><rect x="6" y="17" width="53" height="47" rx="8" fill="url(#gGreen)"/><rect x="16" y="29" width="26" height="22" rx="4" fill="#f6f6f6"/><path d="M43 38l10-8v20l-10-6z" fill="#f6f6f6"/><circle cx="51" cy="53" r="15" fill="#f6f6f6"/><path d="M43 45l4-2 4 6-2 3 6 6 3-2 4 5-3 4q-13-3-16-20z" fill="#1fd050"/></svg>
 <!-- Photos -->
 <svg width="72" height="90" viewBox="0 0 72 90"><circle cx="36" cy="42" r="29.500" fill="#f4f4f4"/><g class="petals"><ellipse cx="36" cy="28.500" rx="7.500" ry="12" fill="#fbaa40"/><ellipse cx="36" cy="28.500" rx="7.500" ry="12" fill="#ece030" transform="rotate(45 36 42)"/><ellipse cx="36" cy="28.500" rx="7.500" ry="12" fill="#acd45c" transform="rotate(90 36 42)"/><ellipse cx="36" cy="28.500" rx="7.500" ry="12" fill="#72c8a0" transform="rotate(135 36 42)"/><ellipse cx="36" cy="28.500" rx="7.500" ry="12" fill="#72b0f0" transform="rotate(180 36 42)"/><ellipse cx="36" cy="28.500" rx="7.500" ry="12" fill="#a090d8" transform="rotate(225 36 42)"/><ellipse cx="36" cy="28.500" rx="7.500" ry="12" fill="#d890c0" transform="rotate(270 36 42)"/><ellipse cx="36" cy="28.500" rx="7.500" ry="12" fill="#f8604e" transform="rotate(315 36 42)"/></g></svg>
 <!-- Pages -->
 <svg width="72" height="90" viewBox="0 0 72 90"><path d="M9 18l44-7 8 55-45 6z" fill="#f8f8f6"/><path d="M9 18l44-7 2 10-44 8z" fill="#fb9220"/><text transform="rotate(-9 22 25)" x="13" y="25" font-size="7" font-weight="600" fill="#ffe2b8">PAGES</text><path d="M16 33l19-3 2 14-19 3z" fill="#2c8ce0"/><path d="M20 35q6 6 6 10 4-4 6-12-6-2-12 2z" fill="#f48020"/><path d="M39 30l13-2M39 34l13-2M40 38l13-2M40 42l13-2M19 52l34-5M20 56l34-5M20 60l34-5M21 64l34-5M22 68l30-4" stroke="#9a9a9a"/><path d="M56 11q5 0 4 4L48 58l-5-2z" fill="#f4a02c"/><path d="M48 54l-4-2-4 18 2 1z" fill="#3a3a3a"/></svg>
 <!-- Photoshop -->
 <svg width="72" height="90" viewBox="0 0 72 90"><rect x="4.500" y="9.500" width="63" height="61.500" fill="#4ccdf8"/><rect x="7" y="12" width="58" height="56" fill="#1b1832"/><text x="35.500" y="52" font-size="35" font-family="Open Sans,sans-serif" font-weight="600" fill="#42cff8" text-anchor="middle" textLength="35" lengthAdjust="spacingAndGlyphs">Ps</text></svg>
 <!-- Numbers -->
 <svg width="72" height="90" viewBox="0 0 72 90"><path d="M7 46h58v23H7z" fill="#f4f4f4"/><path d="M10 49h3M10 54h3M10 59h3" stroke="#bbb"/><rect x="15" y="42" width="10" height="22" fill="#ee3f58"/><rect x="27" y="31" width="10" height="33" fill="#fb9f14"/><rect x="39" y="14" width="10" height="50" fill="#25c84a"/><rect x="51" y="24" width="10" height="40" fill="#2a8ef4"/></svg>
 <!-- System Preferences -->
 <svg width="72" height="90" viewBox="0 0 72 90"><rect x="7" y="15" width="58" height="55" rx="3" fill="url(#gGray)" stroke="#b8bec2"/><circle cx="36" cy="42" r="25" fill="#3c3c3e"/><circle cx="36" cy="42" r="22" fill="none" stroke="#17181a" stroke-width="6"/><circle cx="36" cy="42" r="22" fill="none" stroke="#9b9b9d" stroke-width="5" stroke-dasharray="2.600 2"/><circle cx="36" cy="42" r="18" fill="none" stroke="#a8a8aa" stroke-width="4"/><circle cx="36" cy="42" r="5" fill="#aaa"/><path d="M36 42L27 27M36 42h18M36 42l-9 15" stroke="#a8a8aa" stroke-width="4"/></svg>
 <!-- App Store -->
 <svg width="72" height="90" viewBox="0 0 72 90"><circle cx="36" cy="42" r="29.500" fill="#eef0f2"/><circle cx="36" cy="42" r="27" fill="url(#gBlue)"/><path d="M16 42h40M38 21L21 56M34 21l17 35" stroke="#f4f4f4" stroke-width="4.500" fill="none"/><circle cx="58.500" cy="22" r="12.500" fill="#fc4138"/><text x="58.500" y="28" font-size="17" fill="#fff" text-anchor="middle">1</text></svg>
 <!-- iTunes -->
 <svg width="72" height="90" viewBox="0 0 72 90"><use href="#tunes" x="5" y="11" width="62" height="62"/><use href="#dot" x="31" y="77" width="10" height="10"/></svg>
 <!-- iBooks -->
 <svg width="72" height="90" viewBox="0 0 72 90"><circle cx="36" cy="42" r="29.500" fill="#f4efe8"/><circle cx="36" cy="42" r="27" fill="url(#gOr)"/><path d="M18 31q10-6 17 0v25q-7-5-17 0zM37 31q7-6 17 0v25q-10-5-17 0z" fill="#f6f2ee"/></svg>
 <!-- Photo Booth -->
 <svg width="72" height="90" viewBox="0 0 72 90"><rect x="14" y="15" width="50" height="34" fill="#f4f4f4"/><rect x="17" y="17" width="44" height="30" fill="#b81218"/><path d="M6 29l46-8 6 38-46 8z" fill="#f4f4f4"/><path d="M9 31l19-3 3 15-20 4zM31 28l19-3 3 15-19 3zM12 49l20-3 3 15-20 4z" fill="#b31218"/><g fill="#1e1214"><circle cx="20" cy="37" r="6.500"/><circle cx="42" cy="33" r="6.500"/><circle cx="22" cy="55" r="6.500"/></g><g fill="#eec4a8"><circle cx="20" cy="38" r="4"/><circle cx="42" cy="34" r="4"/><circle cx="22" cy="56" r="4"/></g><circle cx="52" cy="53" r="15" fill="#464646"/><circle cx="52" cy="53" r="9" fill="#26262a"/><circle cx="52" cy="53" r="5" fill="#4c6a6c"/><circle cx="50" cy="55" r="2.500" fill="#7a4a9a"/></svg>
 <!-- Android Studio -->
 <svg width="72" height="90" viewBox="0 0 72 90"><circle cx="36" cy="39" r="28.500" fill="#8bc34a"/><path d="M36 39h28a28 28 0 01-8 20z" fill="#7ab040"/><path d="M30 41l-14 28-2 3 3 0 8-12q11 5 22 0l8 11 4 1-1-4-15-27-3 4 5 9q-9 4-17 0l6-10z" fill="#f4f4f4"/><path d="M33 23h6v6l3 3v10l-6 7-6-7V32l3-3z" fill="#55606a"/><circle cx="36" cy="36" r="3" fill="#9bd05c"/></svg>
 <!-- Word -->
 <svg width="72" height="90" viewBox="0 0 72 90"><path d="M11 21l8 41Q28 50 36 33q6 14 9 29l15-40" fill="none" stroke="#1176bd" stroke-width="10" stroke-linejoin="round" stroke-linecap="round"/><path d="M11 21l8 41M36 33q6 14 9 29" fill="none" stroke="#2b9be2" stroke-width="7" stroke-linecap="round"/></svg>
 <!-- Postman -->
 <svg width="72" height="90" viewBox="0 0 72 90"><circle cx="37" cy="41" r="30" fill="#f15a29"/><circle cx="49" cy="28" r="7" fill="#777" stroke="#f4f4f4" stroke-width="1.500"/><path d="M45 34L34 39 18 52l5 3-14 17 3 2 16-17 8-8 10-13z" fill="#8a8a88" stroke="#eee" stroke-width="1.300"/><path d="M42 34q-10 4-16 13l9-4z" fill="#f59a22"/><path d="M4 71l6-5 4 7z" fill="#e8472a"/></svg>
 <!-- Atom -->
 <svg width="72" height="90" viewBox="0 0 72 90"><use href="#atom" x="5" y="11" width="62" height="62"/><use href="#dot" x="31" y="77" width="10" height="10"/></svg>
 <!-- Photo slideshow -->
 <svg width="72" height="90" viewBox="0 0 72 90"><rect x="11" y="12" width="31" height="60" rx="3" fill="#f4f4f2"/><rect x="13" y="18" width="27" height="48" fill="#38a4e0"/><path d="M17 30l40-7 4 29-39 6z" fill="#f6f6f4"/><path d="M20 32l35-6 3 24-34 6z" fill="#f8a020"/><path d="M22 48l36-5M30 34v16M47 29l2 17M22 43q8-1 8-10 8 9 17-4 3 9 10 10" fill="none" stroke="#7a3c10" stroke-width="1.200"/><circle cx="42" cy="56" r="11" fill="#8e2ac0" stroke="#f0e8f4" stroke-width="1.500"/><path d="M38.500 50.500v11l9-5.500z" fill="#fff"/><use href="#dot" x="31" y="77" width="10" height="10"/></svg>
 <!-- Activity Monitor -->
 <svg width="72" height="90" viewBox="0 0 72 90"><rect x="7" y="16" width="58" height="51" rx="3" fill="#0c0c0c" stroke="#a7b1b0"/><rect x="11" y="20" width="50" height="43" fill="#142a29"/><path d="M11 28h50M11 36h50M11 44h50M11 52h50M11 60h50M19 20v43M27 20v43M35 20v43M43 20v43M51 20v43" stroke="#254a46"/><path d="M11 45h16l3 3 2-25 3 36 3-14h5l4-6 5 8 4-2h5" fill="none" stroke="#7fe8cc" stroke-width="1.300"/><use href="#dot" x="31" y="77" width="10" height="10"/></svg>
 <!-- Terminal -->
 <svg width="72" height="90" viewBox="0 0 72 90"><rect x="7" y="16" width="58" height="51" rx="3" fill="#161616" stroke="#a7b1b0"/><rect x="11" y="20" width="50" height="43" fill="#2e2f32"/><path d="M15 24l7 4-7 5M24 34h7" fill="none" stroke="#f4f4f4" stroke-width="2"/><use href="#dot" x="31" y="77" width="10" height="10"/></svg>
 <!-- Folx -->
 <svg width="72" height="90" viewBox="0 0 72 90"><path d="M32 10Q14 24 22 50M38 22l5-11" fill="none" stroke="#1c1c1c" stroke-width="3"/><path d="M30 30q0-8 6-9 6 1 6 9z" fill="#333"/><rect x="29" y="28" width="13" height="46" rx="3" fill="#d3270d"/><text transform="translate(40 62) rotate(-90)" font-size="12" font-weight="800" fill="#fff" textLength="28">FOLX</text><path d="M16 75q4-4 14-4t14 4zM44 58q14-4 10 8-4 4-11 3" fill="none" stroke="#2c2c2c" stroke-width="3"/><circle cx="58.500" cy="22" r="12.500" fill="#fc4138"/><text x="58.500" y="28" font-size="17" fill="#fff" text-anchor="middle">1</text><use href="#dot" x="31" y="77" width="10" height="10"/></svg>
 <!-- MacRabbit -->
 <svg width="72" height="90" viewBox="0 0 72 90"><path d="M4 70V26Q6 12 17 13q6 0 8 4 4-5 11-4h12v11l-4 3V70H32V30q-1-5-4-4v43H20V30q-2-6-4-2v42z" fill="url(#gMa)"/><path d="M50 13q18 3 18 18 0 9-6 13l6 24q-3 5-9 2-8-6-12-22 7-5 7-14 0-8-4-10z" fill="url(#gMb)"/><use href="#dot" x="31" y="77" width="10" height="10"/></svg>
 <!-- QuickTime -->
 <svg width="72" height="90" viewBox="0 0 72 90"><circle cx="36" cy="42" r="30" fill="url(#gQ)"/><path d="M48 64l6 6q2 2 5 2h7V60l-8-6z" fill="#3c4450"/><circle cx="36" cy="41" r="19" fill="url(#gBlue)"/><path d="M32 40h10l16 20-8 8z" fill="#33373f"/><use href="#dot" x="31" y="77" width="10" height="10"/></svg>
 <svg width="33" height="90" viewBox="0 0 33 90"><path d="M17 12v66" stroke="#77705c" stroke-width="2"/></svg>
 <!-- Documents -->
 <svg width="72" height="90" viewBox="0 0 72 90"><rect x="10" y="22" width="51" height="36" rx="2" fill="#74c9ec"/><path d="M18 9h17l12 14v40H18z" fill="#eee"/><path d="M13 15h28q1 10 8 13 7 3 8 14v30H13z" fill="#fdfdfd"/><path d="M41 15q1 10 8 13 7 3 8 14Q52 22 41 15z" fill="#dcdcdc"/></svg>
 <!-- Minimised iTunes window -->
 <svg width="72" height="90" viewBox="0 0 72 90"><rect x="3" y="21" width="65" height="42" fill="#fff"/><rect x="3" y="22" width="65" height="5" fill="#d4d8dc"/><rect x="3" y="27" width="65" height="15" fill="#0c0408"/><text x="36" y="37" font-size="7" font-weight="700" fill="#fff" text-anchor="middle">01</text><rect x="33" y="38.500" width="6" height="2" fill="#e03058"/><rect x="4" y="45" width="10" height="11" fill="#111"/><path d="M3 61h14" stroke="#f2a030" stroke-width="3"/><path d="M17 61h24" stroke="#8a3a68" stroke-width="3"/><use href="#tunes" x="44" y="46" width="24" height="24"/></svg>
 <!-- Minimised Atom window -->
 <svg width="72" height="90" viewBox="0 0 72 90"><rect x="3" y="23" width="64" height="38" fill="#25272b"/><rect x="3" y="23" width="64" height="2.500" fill="#777"/><path d="M14 29h10M14 33h8M18 37h10M20 41h7M20 45h12M14 49h9M14 53h13" stroke="#4c4246" stroke-width="1.200"/><use href="#atom" x="43" y="46" width="24" height="24"/></svg>
 <!-- Trash -->
 <svg width="72" height="90" viewBox="0 0 72 90"><path d="M12 18l5 48q1 6 8 6h21q7 0 8-6l6-48z" fill="url(#gTrash)"/><ellipse cx="36" cy="18" rx="24" ry="5.500" fill="#b9b8ae" stroke="#f2f2f0" stroke-width="2"/></svg>
</footer>
</body>
</html>
